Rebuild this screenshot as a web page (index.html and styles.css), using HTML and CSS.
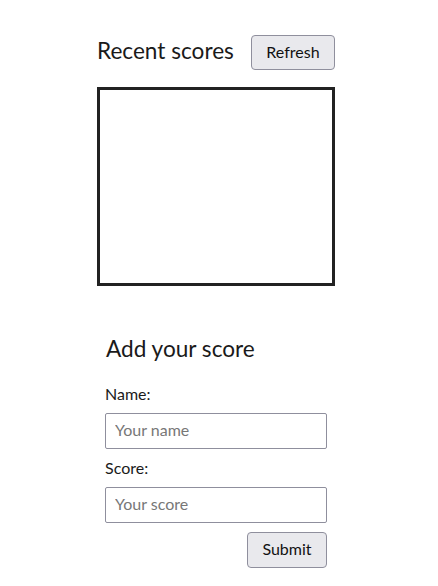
FILE: index.html
```html
<!DOCTYPE html>
<html>
<head>
<meta charset="utf-8">
<link rel="stylesheet" href="styles.css">
</head>
<body>
<div class="page">
  <section class="recent">
    <div class="recent-head">
      <h2 class="title">Recent scores</h2>
      <button class="btn refresh">Refresh</button>
    </div>
    <div class="scores"></div>
  </section>
  <form class="add">
    <h2 class="title add-title">Add your score</h2>
    <label class="label" for="name">Name:</label>
    <input class="field" id="name" type="text" placeholder="Your name">
    <label class="label" for="score">Score:</label>
    <input class="field" id="score" type="text" placeholder="Your score">
    <div class="actions"><button class="btn submit" type="button">Submit</button></div>
  </form>
</div>
</body>
</html>
```

FILE: styles.css
```css
html, body { margin: 0; padding: 0; background: #fff; }
body { font-family: Lato, "Noto Sans", sans-serif; color: #1a1a1a; }
.page { width: 432px; display: flex; flex-direction: column; align-items: center; padding-top: 35px; }
.recent { width: 238px; }
.recent-head { display: flex; align-items: flex-start; justify-content: space-between; height: 35px; }
.title { margin: 0; font-weight: 400; font-size: 22.6px; line-height: 30px; }
.recent-head .title { margin-top: 1px; }
.btn { font-family: inherit; font-size: 16px; color: #111; background: #e9e9ed; border: 1px solid #8f8f9d; border-radius: 4px; padding: 0 0 3px 0; }
.refresh { width: 84px; height: 35px; }
.scores { margin-top: 17px; height: 193px; border: 3px solid #222; }
.add { width: 222px; margin-top: 48px; display: flex; flex-direction: column; }
.add-title { margin-left: 1px; margin-bottom: 20px; }
.label { font-size: 16px; line-height: 20px; margin-bottom: 9px; }
.field { box-sizing: border-box; width: 222px; height: 36px; border: 1px solid #8f8f9d; border-radius: 2px; padding: 0 9px 3px 9px; font-family: inherit; font-size: 16px; margin: 0 0 8px 0; }
#name { margin-bottom: 9px; }
.field::placeholder { color: #777; }
.actions { display: flex; justify-content: flex-end; margin-top: 1px; }
.submit { width: 80px; height: 36px; }
```
